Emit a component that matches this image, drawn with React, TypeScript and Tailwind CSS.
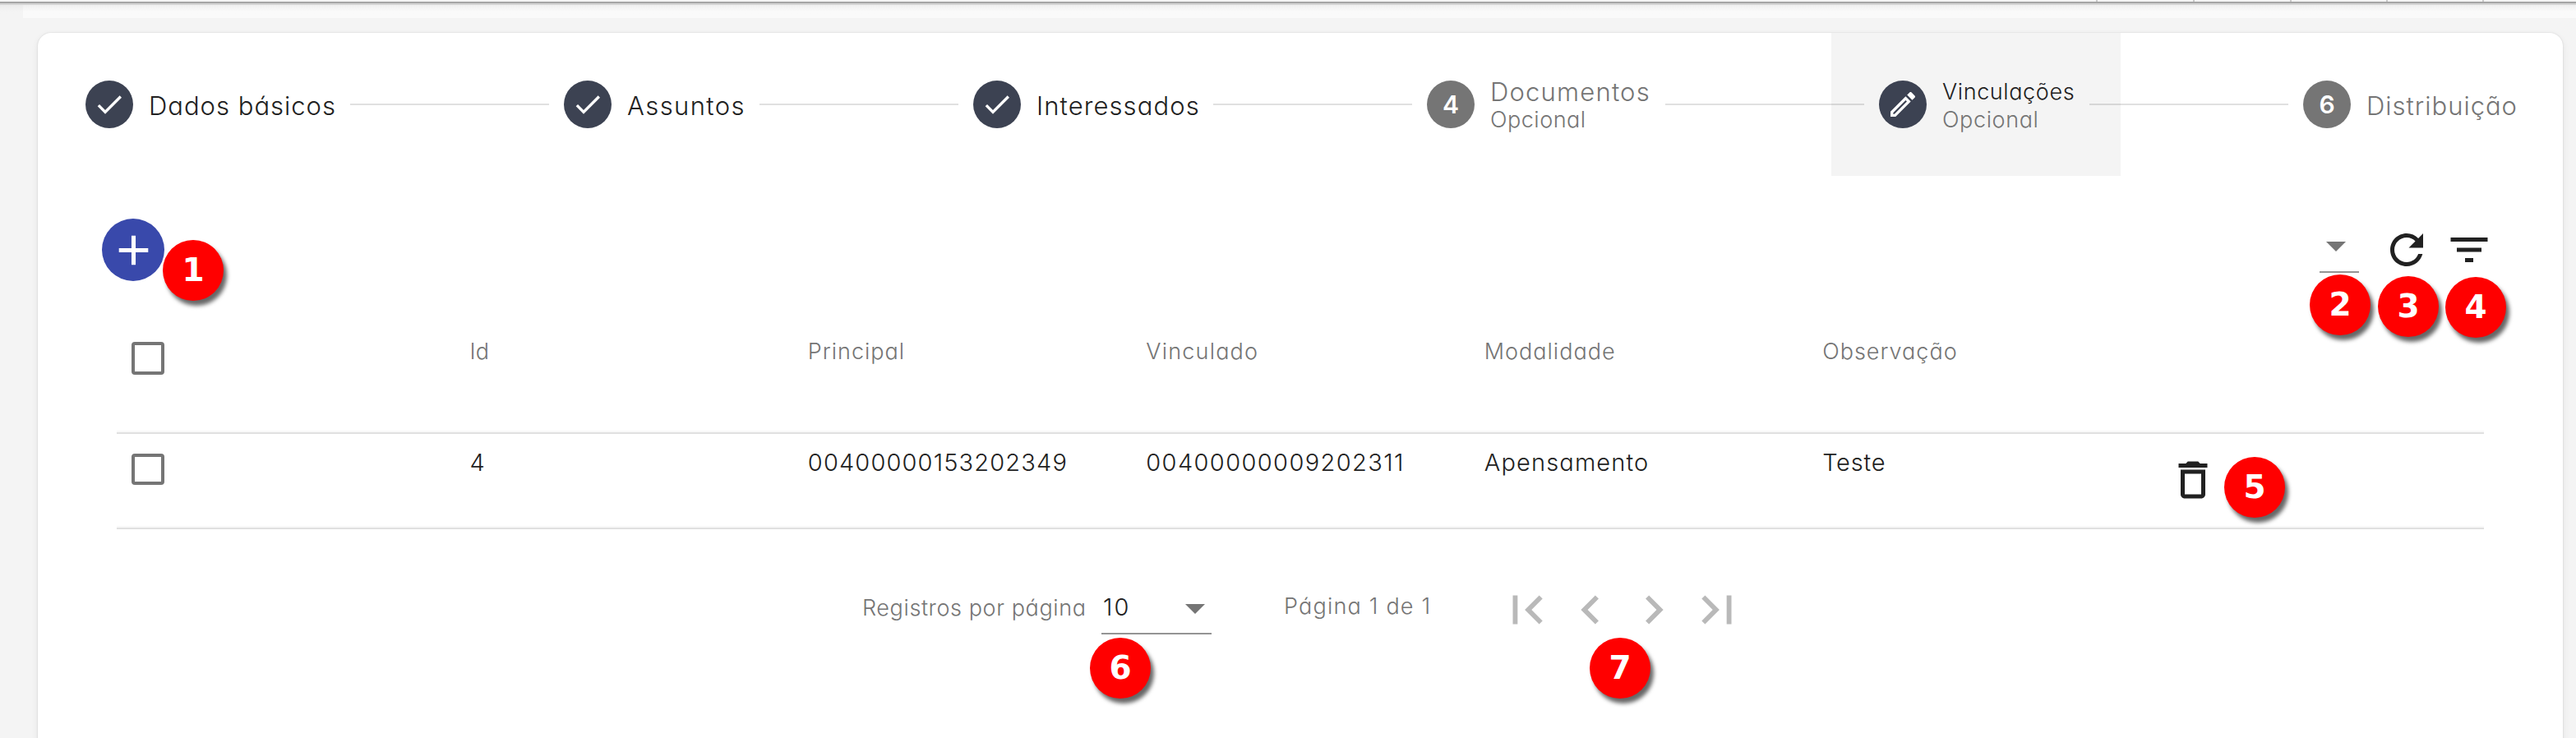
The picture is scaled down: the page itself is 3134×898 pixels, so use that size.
import type { ReactNode } from "react";

function Icon({ d, className }: { d: string; className: string }) {
  return (
    <svg viewBox="0 0 24 24" fill="currentColor" className={"shrink-0 " + className}>
      <path d={d} />
    </svg>
  );
}

const CHECK = "M9 16.17L4.83 12l-1.42 1.41L9 19 21 7l-1.41-1.41z";
const PENCIL =
  "M14.06 9.02l.92.92L5.92 19H5v-.92l9.06-9.06M17.66 3c-.25 0-.51.1-.7.29l-1.83 1.83 3.75 3.75 1.83-1.83c.39-.39.39-1.02 0-1.41l-2.34-2.34c-.2-.2-.45-.29-.71-.29zm-3.6 3.19L3 17.25V21h3.75L17.81 9.94l-3.75-3.75z";
const ADD = "M19 13h-6v6h-2v-6H5v-2h6V5h2v6h6v2z";
const REFRESH =
  "M17.65 6.35C16.2 4.9 14.21 4 12 4c-4.42 0-7.99 3.58-7.99 8s3.57 8 7.99 8c3.73 0 6.84-2.55 7.73-6h-2.08c-.82 2.33-3.04 4-5.65 4-3.31 0-6-2.69-6-6s2.69-6 6-6c1.66 0 3.14.69 4.22 1.78L13 11h7V4l-2.35 2.35z";
const FILTER = "M10 18h4v-2h-4v2zM3 6v2h18V6H3zm3 7h12v-2H6v2z";
const TRASH =
  "M6 19c0 1.1.9 2 2 2h8c1.1 0 2-.9 2-2V7H6v12zM8 9h8v10H8V9zm7.5-5l-1-1h-5l-1 1H5v2h14V4z";
const FIRST = "M18.41 16.59L13.82 12l4.59-4.59L17 6l-6 6 6 6zM6 6h2v12H6z";
const PREV = "M15.41 7.41L14 6l-6 6 6 6 1.41-1.41L10.83 12z";
const NEXT = "M10 6L8.59 7.41 13.17 12l-4.58 4.59L10 18l6-6z";
const LAST = "M5.59 7.41L10.18 12l-4.59 4.59L7 18l6-6-6-6zM16 6h2v12h-2z";

function Caret() {
  return (
    <svg viewBox="0 0 24 12" className="h-3 w-6 shrink-0 fill-[#757575]">
      <path d="M0 0h24L12 12z" />
    </svg>
  );
}

function Step({
  className,
  mark,
  active,
  children,
}: {
  className: string;
  mark: ReactNode;
  active?: boolean;
  children: ReactNode;
}) {
  return (
    <div className={"flex h-[174px] shrink-0 items-center gap-[19px] pl-[58px] " + className}>
      <div
        className={
          "flex size-[58px] shrink-0 items-center justify-center rounded-full text-[30px] font-semibold leading-none text-white " +
          (active ? "bg-[#3c4252]" : "bg-[#757575]")
        }
      >
        {mark}
      </div>
      <div className="flex flex-col pt-[3px] whitespace-nowrap">{children}</div>
    </div>
  );
}

function Connector() {
  return <div className="z-10 -mx-10 h-[2px] w-[242px] shrink-0 bg-black/12" />;
}

function Checkbox({ className }: { className: string }) {
  return <div className={"w-10 rounded-[4px] border-4 border-[#757575] " + className} />;
}

const HEADERS: [string, string][] = [
  ["Id", "tracking-[0.3px]"],
  ["Principal", "tracking-[1px]"],
  ["Vinculado", "tracking-[1.2px]"],
  ["Modalidade", "tracking-[1px]"],
  ["Observação", "tracking-[1px]"],
];
const ROW: [string, string][] = [
  ["4", "tracking-normal"],
  ["00400000153202349", "tracking-[1.15px]"],
  ["00400000009202311", "tracking-[1.4px]"],
  ["Apensamento", "tracking-[1.15px]"],
  ["Teste", "tracking-[0.8px]"],
];

const CALLOUTS: [string, string][] = [
  ["1", "left-[198px] top-[292px]"],
  ["2", "left-[2810px] top-[334px]"],
  ["3", "left-[2893px] top-[336px]"],
  ["4", "left-[2975px] top-[337px]"],
  ["5", "left-[2706px] top-[556px]"],
  ["6", "left-[1326px] top-[776px]"],
  ["7", "left-[1934px] top-[776px]"],
];

const TICKS = ["left-[2550px]", "left-[2668px]", "left-[2786px]", "left-[2903px]", "left-[3020px]"];

export default function App() {
  return (
    <div className="relative flex h-[898px] w-[3134px] flex-col overflow-hidden bg-[#f4f4f4] font-['Inter','Liberation_Sans',sans-serif] font-light text-[#212121] [font-feature-settings:'cv11']">
      <div className="h-[2px] shrink-0" />
      <div className="h-[2px] shrink-0 bg-[#a5a5a5]" />
      <div className="h-[2px] shrink-0 bg-[#d3d3d3]" />
      <div className="h-4 shrink-0 bg-linear-to-b from-[#ebebeb] to-[#f4f4f4] to-50% pl-7">
        <div className="h-4 bg-linear-to-b from-[#efefef] to-[#fafafa] to-50%" />
      </div>

      <main className="mt-[18px] ml-[46px] h-[900px] w-[3072px] shrink-0 overflow-hidden rounded-[16px] bg-white shadow-[0_0_2px_0_rgba(0,0,0,0.14),0_3px_8px_0_rgba(0,0,0,0.08)]">
        <div className="flex items-center">
          <Step className="w-[420px]" active mark={<Icon d={CHECK} className="size-10" />}>
            <span className="text-[31px] leading-[34px] tracking-[1px]">Dados básicos</span>
          </Step>
          <Connector />
          <Step className="w-[336px]" active mark={<Icon d={CHECK} className="size-10" />}>
            <span className="text-[31px] leading-[34px] tracking-[1.4px]">Assuntos</span>
          </Step>
          <Connector />
          <Step className="w-[390px]" active mark={<Icon d={CHECK} className="size-10" />}>
            <span className="text-[31px] leading-[34px] tracking-[1.1px]">Interessados</span>
          </Step>
          <Connector />
          <Step className="w-[388px]" mark="4">
            <span className="text-[31px] leading-[34px] tracking-[1.2px] text-[#757575]">Documentos</span>
            <span className="text-[27px] leading-[34px] tracking-[0.5px] text-[#757575]">Opcional</span>
          </Step>
          <Connector />
          <Step
            className="mr-[2px] w-[352px] bg-[#f4f4f4]"
            active
            mark={<Icon d={PENCIL} className="size-10" />}
          >
            <span className="text-[27px] leading-[34px] tracking-[0.6px]">Vinculações</span>
            <span className="text-[27px] leading-[34px] tracking-[0.6px] text-[#757575]">Opcional</span>
          </Step>
          <Connector />
          <Step className="w-[374px]" mark="6">
            <span className="text-[31px] leading-[34px] tracking-[1px] text-[#757575]">Distribuição</span>
          </Step>
        </div>

        <div className="flex items-center justify-between pt-[52px] pr-[84px] pl-[78px]">
          <button className="flex size-[76px] items-center justify-center rounded-full bg-[#3949ab] text-white">
            <Icon d={ADD} className="size-[61px]" />
          </button>
          <div className="flex items-center">
            <div className="mr-7 flex h-14 w-12 border-b-2 border-[#949494] pt-[18px] pl-2">
              <Caret />
            </div>
            <Icon d={REFRESH} className="mr-4 size-[60px]" />
            <Icon d={FILTER} className="size-[60px]" />
          </div>
        </div>

        <div className="mr-24 ml-24 flex flex-col">
          <div className="grid h-[186px] grid-cols-7 items-start border-b-2 border-[#e0e0e0] text-[27px] leading-9 text-[#757575] shadow-[inset_0_-2px_0_#f8f8f8]">
            <div className="pt-[74px] pl-[18px]">
              <Checkbox className="h-10" />
            </div>
            {HEADERS.map(([label, tracking]) => (
              <div key={label} className="pt-[68px] pl-[18px]">
                <span className={tracking}>{label}</span>
              </div>
            ))}
            <div />
          </div>
          <div className="grid h-[116px] grid-cols-7 items-start border-b-2 border-[#e0e0e0] text-[29px] leading-9 shadow-[inset_0_-2px_0_#f8f8f8]">
            <div className="pt-6 pl-[18px]">
              <Checkbox className="h-[38px]" />
            </div>
            {ROW.map(([value, tracking]) => (
              <div key={value} className="pt-[17px] pl-[18px]">
                <span className={tracking}>{value}</span>
              </div>
            ))}
            <div className="pt-[26px] pl-[27px]">
              <Icon d={TRASH} className="size-[60px]" />
            </div>
          </div>
        </div>

        <div className="flex items-start pt-[60px] pl-[1003px] whitespace-nowrap">
          <div className="w-[291px] pt-[18px] text-[27px] leading-9 text-[#757575]">
            <span className="tracking-[0.6px]">Registros por página</span>
          </div>
          <div className="flex h-[68px] w-[134px] justify-between border-b-2 border-[#949494] pt-[17px] pr-2 pl-[2px]">
            <span className="text-[29px] leading-9 tracking-[2.2px]">10</span>
            <div className="pt-[14px]">
              <Caret />
            </div>
          </div>
          <div className="w-[262px] pt-4 pl-[88px] text-[27px] leading-9 text-[#757575]">
            <span className="tracking-[1.2px]">Página 1 de 1</span>
          </div>
          <div className="ml-[87px] flex gap-[7px] pt-[3px] text-[#b9b9b9]">
            <Icon d={FIRST} className="size-[70px]" />
            <Icon d={PREV} className="size-[70px]" />
            <Icon d={NEXT} className="size-[70px]" />
            <Icon d={LAST} className="size-[70px]" />
          </div>
        </div>
      </main>

      {TICKS.map((left) => (
        <div key={left} className={"absolute top-0 h-[2px] w-[2px] bg-[#c8c8c8] " + left} />
      ))}

      {CALLOUTS.map(([n, place]) => (
        <div
          key={n}
          className={
            "absolute z-20 flex size-[74px] items-center justify-center rounded-full bg-[#ff0000] pb-px font-['DejaVu_Sans',sans-serif] text-[39px] leading-none font-bold text-white shadow-[4px_6px_5px_0_rgba(0,0,0,0.6)] " +
            place
          }
        >
          {n}
        </div>
      ))}
    </div>
  );
}
